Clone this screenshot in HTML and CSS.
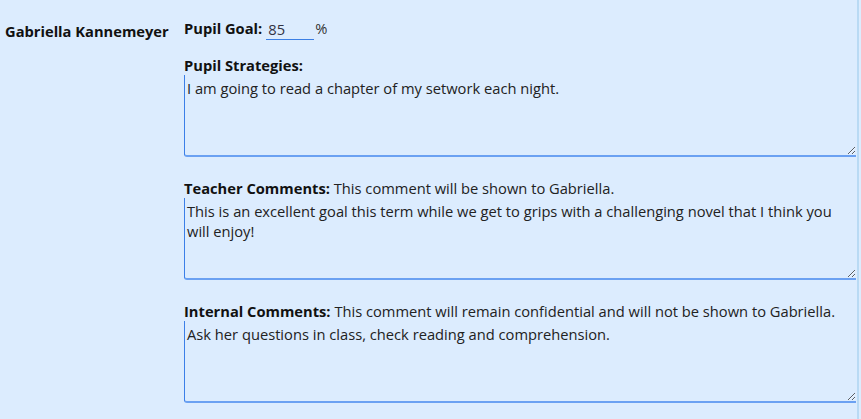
FILE: index.html
```html
<!DOCTYPE html>
<html lang="en">
<head>
    <meta charset="UTF-8">
    <meta name="viewport" content="width=device-width, initial-scale=1.0">
    <title>Pupil Goals</title>
    <link rel="stylesheet" href="styles.css">
</head>
<body>
    <div class="pupil-row">
        <div class="pupil-name">Gabriella Kannemeyer</div>
        <div class="pupil-fields">
            <div class="goal-line">
                <label class="field-label" for="goal">Pupil Goal:</label>
                <input id="goal" class="goal-input" type="text" value="85">%
            </div>

            <div class="field-title"><span class="field-label">Pupil Strategies:</span></div>
            <textarea class="comment-box">I am going to read a chapter of my setwork each night.</textarea>

            <div class="field-title"><span class="field-label">Teacher Comments:</span> This comment will be shown to Gabriella.</div>
            <textarea class="comment-box">This is an excellent goal this term while we get to grips with a challenging novel that I think you will enjoy!</textarea>

            <div class="field-title"><span class="field-label">Internal Comments:</span> This comment will remain confidential and will not be shown to Gabriella.</div>
            <textarea class="comment-box">Ask her questions in class, check reading and comprehension.</textarea>
        </div>
    </div>
</body>
</html>
```

FILE: styles.css
```css
html {
    background-color: #dcecfe;
}
body {
    margin: 0;
    font-family: "Open Sans", Arial, sans-serif;
    font-size: 14.7px;
    line-height: 20px;
    color: #222;
}
.pupil-row {
    display: flex;
    width: 859px;
    height: 419px;
    box-sizing: border-box;
    border-right: 2px solid #b9daf4;
}
.pupil-name {
    width: 179px;
    padding: 21px 0 0 5px;
    font-weight: bold;
    color: #111;
}
.pupil-fields {
    width: 672px;
    padding-top: 18px;
}
.field-label {
    font-weight: bold;
    color: #111;
}
.goal-line {
    display: flex;
    align-items: flex-start;
    height: 21px;
    margin-bottom: 16px;
    color: #333;
}
.goal-input {
    width: 48px;
    height: 22px;
    box-sizing: border-box;
    margin: 0 1px 0 4px;
    padding: 0 2px;
    border: none;
    border-bottom: 1px solid #3b7fe4;
    background: transparent;
    font-family: inherit;
    font-size: 14.7px;
    color: #334;
}
.field-title {
    height: 20px;
}
.comment-box {
    display: block;
    width: 672px;
    height: 82px;
    box-sizing: border-box;
    margin: 0 0 21px 0;
    padding: 3px 2px;
    border: none;
    border-left: 1px solid #3b7fe8;
    border-bottom: 2px solid #6ba1f2;
    border-bottom-left-radius: 3px;
    background: transparent;
    font-family: inherit;
    font-size: 14.7px;
    line-height: 20px;
    color: #222;
}
```
